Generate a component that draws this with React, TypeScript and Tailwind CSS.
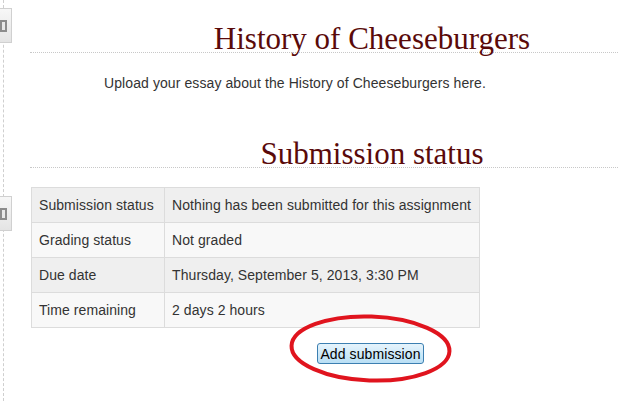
import React from "react";

const rows: [string, string][] = [
  ["Submission status", "Nothing has been submitted for this assignment"],
  ["Grading status", "Not graded"],
  ["Due date", "Thursday, September 5, 2013, 3:30 PM"],
  ["Time remaining", "2 days 2 hours"],
];

function SideTab({ top }: { top: string }) {
  return (
    <div className={`absolute left-0 ${top} w-[12px] h-[35px] bg-gradient-to-b from-[#f7f7f7] to-[#e4e4e4] border border-l-0 border-[#d0d0d0] flex items-center`}>
      <div className="w-[7px] h-[12px] border-2 border-[#8c8c8c] bg-[#e8e8e8]" />
    </div>
  );
}

export default function App() {
  return (
    <div className="relative w-[618px] h-[401px] bg-white overflow-hidden" style={{ fontFamily: '"Liberation Sans", Arial, sans-serif' }}>
      <div className="absolute left-[3px] top-0 bottom-0 border-l border-dashed border-[#cfcfcf]" />
      <SideTab top="top-[8px]" />
      <SideTab top="top-[196px]" />

      <div className="pl-[30px] w-[714px]">
        <h2
          className="mt-[25px] text-[31px] leading-[27px] text-center text-[#5a0a0a] border-b border-dotted border-[#c8c8c8]"
          style={{ fontFamily: '"Liberation Serif", Georgia, serif' }}
        >
          History of Cheeseburgers
        </h2>
        <p className="mt-[20px] ml-[74px] text-[14px] leading-[20px] tracking-[0.09px] text-[#333]">
          Upload your essay about the History of Cheeseburgers here.
        </p>
        <h2
          className="mt-[48px] text-[31px] leading-[26px] text-center text-[#5a0a0a] border-b border-dotted border-[#c8c8c8]"
          style={{ fontFamily: '"Liberation Serif", Georgia, serif' }}
        >
          Submission status
        </h2>
        <table className="mt-[19px] ml-[1px] w-[449px] border-collapse text-[14px] tracking-[0.07px] text-[#333]">
          <tbody>
            {rows.map(([a, b], i) => (
              <tr key={a} className={i % 2 === 0 ? "bg-[#efefef]" : "bg-[#f8f8f8]"}>
                <td className="w-[135px] h-[35px] pl-[7px] pr-[8px] border border-[#dcdcdc] whitespace-nowrap">{a}</td>
                <td className="h-[35px] pl-[7px] pr-[8px] border border-[#dcdcdc] whitespace-nowrap">{b}</td>
              </tr>
            ))}
          </tbody>
        </table>
        <div className="relative mt-[15px] w-[684px] flex justify-center">
          <button className="h-[21px] w-[107px] -ml-[3px] text-[14px] leading-none tracking-[0.1px] text-black bg-gradient-to-b from-[#e6f4fc] to-[#b9dff5] border border-[#3c7fb1] rounded-[3px]">
            Add submission
          </button>
        </div>
      </div>

      <svg className="absolute left-0 top-0" width="618" height="401" viewBox="0 0 618 401">
        <ellipse cx="370.5" cy="348.5" rx="79" ry="32" fill="none" stroke="#e0141e" strokeWidth="4" transform="rotate(2 370.5 348.5)" />
      </svg>
    </div>
  );
}
